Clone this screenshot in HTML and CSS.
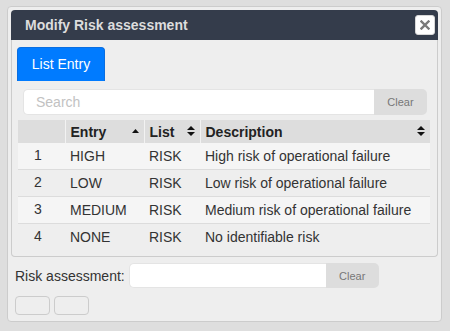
FILE: index.html
```html
<!DOCTYPE html>
<html lang="en">
<head>
  <meta charset="UTF-8">
  <title>Modify Risk assessment</title>
  <link rel="stylesheet" href="styles.css">
</head>
<body>

  <div class="dialog">
    <div class="titlebar">
      <span class="title">Modify Risk assessment</span>
      <button class="close-btn">
        <svg width="10" height="10" viewBox="0 0 10 10"><path d="M1.5 1.5 L8.5 8.5 M8.5 1.5 L1.5 8.5" stroke="#7a7a7a" stroke-width="2.4" stroke-linecap="square"/></svg>
      </button>
    </div>

    <div class="panel">
      <div class="tabs">
        <div class="tab active">List Entry</div>
      </div>

      <div class="search-row">
        <input type="text" class="search-input" placeholder="Search">
        <button class="clear-btn">Clear</button>
      </div>

      <table class="entry-table">
        <thead>
          <tr>
            <th class="col-idx"></th>
            <th class="col-entry">Entry <span class="sort"><svg width="7" height="4" viewBox="0 0 7 4"><path d="M0 4 L3.5 0 L7 4 Z" fill="#111"/></svg></span></th>
            <th class="col-list">List <span class="sort"><svg width="8" height="10" viewBox="0 0 8 10"><path d="M0 4 L4 0 L8 4 Z M0 6 L4 10 L8 6 Z" fill="#111"/></svg></span></th>
            <th class="col-desc">Description <span class="sort"><svg width="8" height="10" viewBox="0 0 8 10"><path d="M0 4 L4 0 L8 4 Z M0 6 L4 10 L8 6 Z" fill="#111"/></svg></span></th>
          </tr>
        </thead>
        <tbody>
          <tr>
            <td class="col-idx">1</td>
            <td>HIGH</td>
            <td>RISK</td>
            <td>High risk of operational failure</td>
          </tr>
          <tr>
            <td class="col-idx">2</td>
            <td>LOW</td>
            <td>RISK</td>
            <td>Low risk of operational failure</td>
          </tr>
          <tr>
            <td class="col-idx">3</td>
            <td>MEDIUM</td>
            <td>RISK</td>
            <td>Medium risk of operational failure</td>
          </tr>
          <tr>
            <td class="col-idx">4</td>
            <td>NONE</td>
            <td>RISK</td>
            <td>No identifiable risk</td>
          </tr>
        </tbody>
      </table>
    </div>

    <div class="field-row">
      <label for="riskValue">Risk assessment:</label>
      <input type="text" id="riskValue" class="field-input">
      <button class="clear-btn">Clear</button>
    </div>

    <div class="actions">
      <button class="small-btn"></button>
      <button class="small-btn"></button>
    </div>
  </div>

</body>
</html>
```

FILE: styles.css
```css
body {
  margin: 0;
  padding: 0;
  background-color: #dedede;
  font-family: "Liberation Sans", Arial, sans-serif;
}

.dialog {
  box-sizing: border-box;
  margin: 6px 0 0 7px;
  width: 435px;
  height: 316px;
  padding: 3px;
  background-color: #eeeeee;
  border: 1px solid #cccccc;
  border-radius: 4px;
}

/* Title bar */
.titlebar {
  height: 30px;
  background-color: #343c4b;
  border-radius: 4px 4px 0 0;
  display: flex;
  align-items: center;
  justify-content: space-between;
  padding: 0 3px 0 14px;
}

.title {
  color: #dddddd;
  font-weight: bold;
  font-size: 14px;
}

.close-btn {
  width: 20px;
  height: 20px;
  padding: 0;
  border: 1px solid #d8d8d8;
  border-radius: 3px;
  background-color: #ffffff;
  display: flex;
  align-items: center;
  justify-content: center;
}

/* Panel */
.panel {
  height: 217px;
  box-sizing: border-box;
  border: 1px solid #cccccc;
  border-top: none;
  border-radius: 0 0 4px 4px;
  background-color: #eeeeee;
}

.tabs {
  display: flex;
  padding: 7px 0 0 5px;
}

.tab {
  box-sizing: border-box;
  width: 88px;
  height: 34px;
  line-height: 32px;
  text-align: center;
  font-size: 14px;
  color: #ffffff;
  background-color: #007bff;
  border: 1px solid #0a6ee0;
  border-bottom: none;
  border-radius: 4px 4px 0 0;
}

.search-row {
  display: flex;
  margin: 8px 10px 0 11px;
  height: 26px;
}

.search-input {
  flex: 1;
  box-sizing: border-box;
  height: 26px;
  padding: 0 12px;
  border: 1px solid #e4e4e4;
  border-right: none;
  border-radius: 5px 0 0 5px;
  background-color: #ffffff;
  font-family: inherit;
  font-size: 14px;
  outline: none;
}

.search-input::placeholder {
  color: #c2c2c2;
}

.clear-btn {
  width: 53px;
  height: 26px;
  padding: 0;
  border: none;
  border-radius: 0 5px 5px 0;
  background-color: #dddddd;
  color: #777777;
  font-family: inherit;
  font-size: 11px;
}

/* Table */
.entry-table {
  margin: 5px 6px 0 6px;
  width: 412px;
  border-collapse: collapse;
  font-size: 14px;
  color: #333333;
}

.entry-table th {
  height: 23px;
  padding: 0 5px;
  background-color: #dddddd;
  color: #222222;
  text-align: left;
  font-weight: bold;
  border-left: 1px solid #f2f2f2;
  position: relative;
}

.entry-table th:first-child {
  border-left: none;
}

.entry-table .sort {
  position: absolute;
  right: 5px;
  top: 6px;
  line-height: 0;
}

.entry-table .col-entry .sort {
  top: 8px;
  right: 5px;
}

.entry-table td {
  height: 26px;
  padding: 0 5px;
  border-top: 1px solid #dcdcdc;
}

.entry-table tbody tr:first-child td {
  border-top: none;
}

.entry-table tbody tr:nth-child(odd) {
  background-color: #f5f5f5;
}

.entry-table th.col-idx,
.entry-table td.col-idx {
  width: 47px;
  box-sizing: border-box;
  padding-left: 16px;
}

.entry-table td.col-idx {
  padding-bottom: 3px;
}

.entry-table .col-entry {
  width: 79px;
  box-sizing: border-box;
}

.entry-table .col-list {
  width: 56px;
  box-sizing: border-box;
}

/* Bottom field */
.field-row {
  display: flex;
  align-items: center;
  margin: 6px 0 0 4px;
  height: 25px;
}

.field-row label {
  font-size: 14px;
  color: #333333;
  margin-right: 4px;
}

.field-input {
  box-sizing: border-box;
  width: 197px;
  height: 25px;
  border: 1px solid #e4e4e4;
  border-right: none;
  border-radius: 5px 0 0 5px;
  background-color: #ffffff;
  outline: none;
}

.field-row .clear-btn {
  height: 25px;
}

.actions {
  display: flex;
  gap: 4px;
  margin: 8px 0 0 4px;
}

.small-btn {
  width: 35px;
  height: 19px;
  padding: 0;
  border: 1px solid #cccccc;
  border-radius: 4px;
  background-color: #eeeeee;
}
```
